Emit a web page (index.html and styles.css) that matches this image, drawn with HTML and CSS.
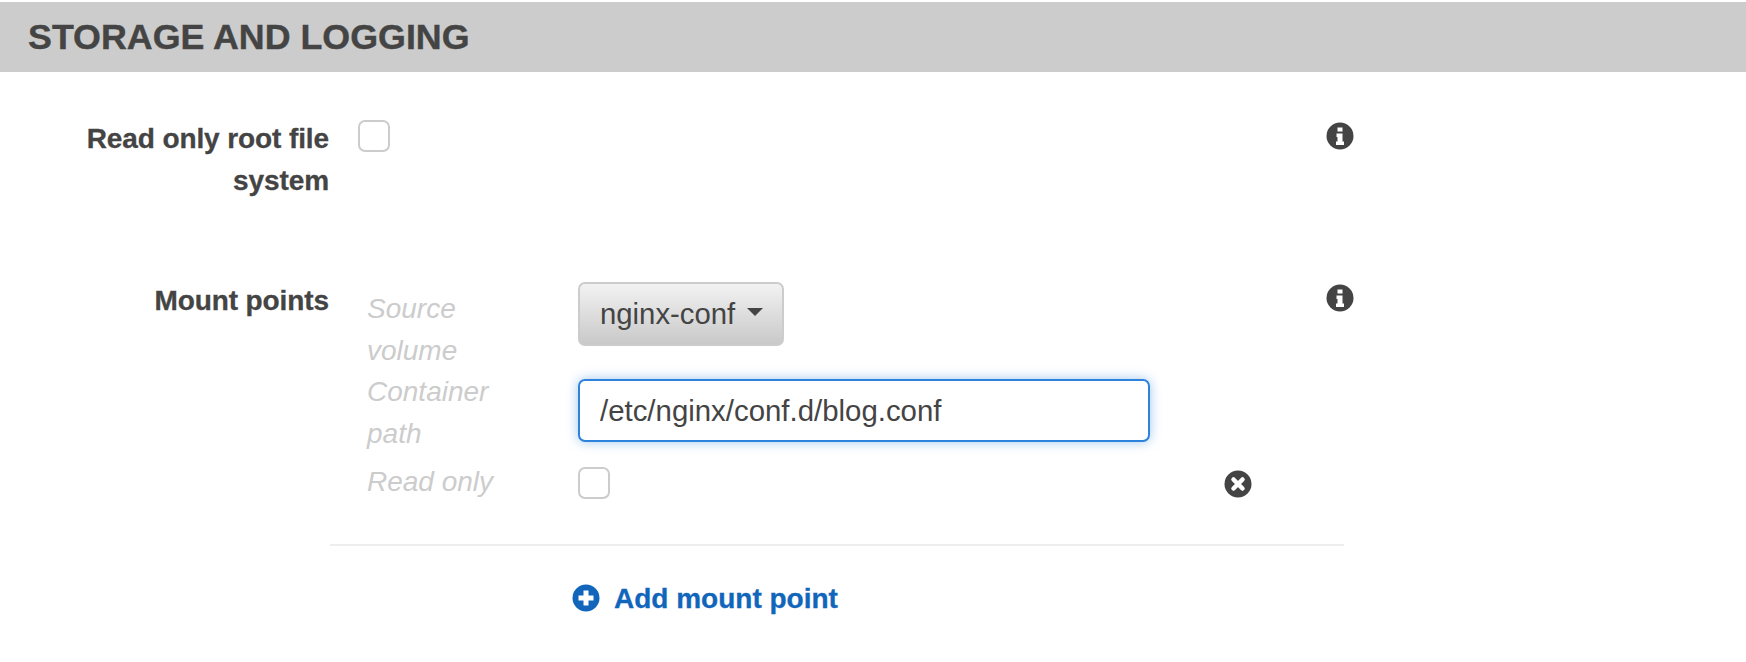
FILE: index.html
```html
<!DOCTYPE html>
<html lang="en">

<head>
    <meta charset="UTF-8">
    <meta name="viewport" content="width=device-width, initial-scale=1.0">
    <title>Storage and logging</title>
    <link rel="stylesheet" href="styles.css">
</head>

<body>
    <h2 class="section-title">STORAGE AND LOGGING</h2>

    <div class="form-row root-row">
        <label class="field-label">Read only root file system</label>
        <div class="field-control">
            <span class="checkbox"></span>
        </div>
        <svg class="icon info-icon" viewBox="0 0 28 28">
            <circle cx="14" cy="14" r="13.500" fill="#444" />
            <path fill="#fff" d="M11.500 5.500h5v4h-5zM10.500 11.500h6v8h1.500v3.500h-8v-3.500h1.500v-4.500h-1z" />
        </svg>
    </div>

    <div class="form-row mount-row">
        <label class="field-label">Mount points</label>
        <div class="mount-list">
            <div class="mount-line line-source">
                <span class="sub-label">Source volume</span>
                <div><button class="select-btn">nginx-conf<span class="caret"></span></button></div>
            </div>
            <div class="mount-line line-path">
                <span class="sub-label">Container path</span>
                <div><input class="text-input" type="text" value="/etc/nginx/conf.d/blog.conf"></div>
            </div>
            <div class="mount-line line-readonly">
                <span class="sub-label">Read only</span>
                <div><span class="checkbox"></span></div>
                <svg class="icon remove-icon" viewBox="0 0 28 28">
                    <circle cx="14" cy="14" r="13.500" fill="#444" />
                    <path stroke="#fff" stroke-width="4.500" stroke-linecap="round" d="M9.500 9.500l9 9M18.500 9.500l-9 9" />
                </svg>
            </div>
        </div>
        <svg class="icon info-icon" viewBox="0 0 28 28">
            <circle cx="14" cy="14" r="13.500" fill="#444" />
            <path fill="#fff" d="M11.500 5.500h5v4h-5zM10.500 11.500h6v8h1.500v3.500h-8v-3.500h1.500v-4.500h-1z" />
        </svg>
    </div>

    <hr class="divider">

    <a class="add-link" href="#">
        <svg class="icon add-icon" viewBox="0 0 28 28">
            <circle cx="14" cy="14" r="13.500" fill="#1166bb" />
            <path fill="#fff" d="M11.500 6.500h5v5h5v5h-5v5h-5v-5h-5v-5h5z" />
        </svg>
        <span class="add-text">Add mount point</span>
    </a>
</body>

</html>
```

FILE: styles.css
```css
* {
    padding: 0;
    margin: 0;
    box-sizing: border-box;
}

body {
    font-family: "Liberation Sans", Arial, sans-serif;
    font-size: 28px;
    line-height: 42px;
    color: #444;
    background: #fff;
}

.section-title {
    margin-top: 2px;
    height: 70px;
    padding-left: 28px;
    font-size: 35.800px;
    line-height: 70px;
    font-weight: 700;
    -webkit-text-stroke: 0.4px #444;
    background: #ccc;
}

.form-row {
    display: flex;
    align-items: flex-start;
}

.root-row {
    height: 210px;
    padding-top: 48px;
}

.field-label {
    flex: none;
    width: 329px;
    margin-top: -2px;
    padding-left: 80px;
    text-align: right;
    font-weight: 700;
    letter-spacing: -0.1px;
    -webkit-text-stroke: 0.3px #444;
}

.field-control {
    width: 968px;
    margin-left: 29px;
}

.checkbox {
    display: block;
    width: 32px;
    height: 32px;
    border: 2px solid #ccc;
    border-radius: 7px;
    background: #fff;
}

.icon {
    display: block;
    flex: none;
    width: 28px;
    height: 28px;
}

.info-icon {
    margin-top: 2px;
}

.mount-row {
    height: 262px;
}

.mount-list {
    flex: none;
    width: 959px;
    margin-left: 38px;
}

.mount-line {
    display: grid;
    grid-template-columns: 211px 646px 28px;
}

.sub-label {
    max-width: 170px;
    font-style: italic;
    color: #ccc;
}

.line-source {
    height: 89px;
}

.line-source .sub-label {
    padding-top: 6px;
}

.line-path {
    height: 84px;
}

.line-path .text-input {
    margin-top: 8px;
}

.line-readonly .sub-label {
    padding-top: 6px;
}

.line-readonly .checkbox {
    margin-top: 12px;
}

.remove-icon {
    margin-top: 15px;
}

.select-btn {
    display: flex;
    align-items: center;
    width: 206px;
    height: 64px;
    padding-left: 20px;
    font: inherit;
    font-size: 29.300px;
    color: #444;
    border: 2px solid #ccc;
    border-radius: 7px;
    background: linear-gradient(#f2f2f2, #c9c9c9);
}

.caret {
    width: 0;
    height: 0;
    margin: 0 0 5px 12px;
    border-left: 8px solid transparent;
    border-right: 8px solid transparent;
    border-top: 8px solid #444;
}

.text-input {
    display: block;
    width: 572px;
    height: 63px;
    padding: 0 20px;
    font: inherit;
    font-size: 29.400px;
    color: #444;
    border: 2px solid #2d83dc;
    border-radius: 7px;
    outline: none;
    box-shadow: 0 0 12px rgba(45, 131, 220, 0.45);
}

.divider {
    width: 1014px;
    margin-left: 330px;
    border: none;
    border-top: 2px solid #eee;
}

.add-link {
    display: flex;
    align-items: center;
    gap: 14px;
    margin: 30px 0 0 572px;
    font-weight: 700;
    color: #1166bb;
    text-decoration: none;
    -webkit-text-stroke: 0.3px #1166bb;
}

.add-text {
    padding-top: 2px;
}
```
